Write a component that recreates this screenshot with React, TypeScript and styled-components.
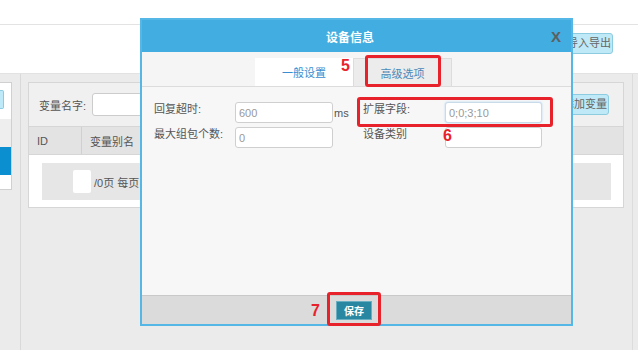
import React from 'react';
import styled, { createGlobalStyle } from 'styled-components';

const GlobalStyle = createGlobalStyle`
  * { box-sizing: border-box; }
  body {
    margin: 0;
    font-family: "Liberation Sans", "Noto Sans CJK SC", sans-serif;
    font-size: 11px;
    color: #555;
  }
`;

const Page = styled.div`
  position: relative;
  width: 638px;
  height: 350px;
  background: #ebebeb;
  overflow: hidden;
  display: flex;
  flex-direction: column;
`;

const TopStrip = styled.div`
  height: 25px;
  background: #fff;
  border-bottom: 1px solid #e3e3e3;
`;

const Toolbar = styled.div`
  height: 49px;
  background: #fff;
  border-bottom: 1px solid #e2e2e2;
  display: flex;
  justify-content: flex-end;
  align-items: flex-start;
  padding: 8px 25px 0 0;
`;

const LightButton = styled.div`
  height: 21px;
  padding: 0 1px;
  background: #bfe9f7;
  border: 1px solid #8ccbe0;
  border-radius: 3px;
  color: #666;
  line-height: 19px;
  white-space: nowrap;
`;

const Main = styled.div`
  flex: 1;
  display: flex;
  padding-right: 5px;
`;

const Sidebar = styled.div`
  width: 21px;
  border-right: 1px solid #d9d9d9;
  padding-top: 8px;
`;

const SidePanel = styled.div`
  width: 12px;
  height: 108px;
  background: #fff;
  border: 1px solid #d0d0d0;
  border-left: none;
  display: flex;
  flex-direction: column;
`;

const SideTop = styled.div`
  height: 36px;
  padding-top: 7px;
`;

const SideStub = styled.div`
  width: 4px;
  height: 19px;
  background: #bde9f8;
  border: 1px solid #8ccbe0;
  border-left: none;
  border-radius: 0 2px 2px 0;
`;

const SideRow = styled.div<{ $active?: boolean }>`
  height: 28px;
  background: ${p => (p.$active ? '#0b8fd0' : '#eeeeee')};
`;

const Content = styled.div`
  flex: 1;
  padding: 8px 8px 0 7px;
  border-right: 1px solid #dcdcdc;
`;

const Card = styled.div`
  border: 1px solid #d6d6d6;
  background: #fff;
`;

const CardHead = styled.div`
  height: 43px;
  background: #f0f0f0;
  display: flex;
  align-items: center;
  padding: 0 14px 0 10px;
`;

const SearchLabel = styled.span`
  margin-right: 6px;
`;

const SearchInput = styled.div`
  width: 200px;
  height: 23px;
  background: #fff;
  border: 1px solid #ccc;
  border-radius: 3px;
`;

const Spacer = styled.div`
  flex: 1;
`;

const TableHead = styled.div`
  height: 29px;
  display: flex;
  background: #e3e3e3;
  border-top: 1px solid #d6d6d6;
  border-bottom: 1px solid #d6d6d6;
`;

const HeadCell = styled.div<{ $w?: number }>`
  ${p => (p.$w ? `width: ${p.$w}px; border-right: 1px solid #d0d0d0;` : 'flex: 1;')}
  display: flex;
  align-items: center;
  padding-left: 8px;
  color: #555;
`;

const TableBody = styled.div`
  padding: 8px 12px 7px 13px;
`;

const Pager = styled.div`
  height: 37px;
  background: #e6e6e6;
  display: flex;
  align-items: center;
  padding-left: 31px;
`;

const PageInput = styled.div`
  width: 18px;
  height: 23px;
  background: #fff;
  border-radius: 2px;
  margin-right: 3px;
`;

/* ---------- modal ---------- */

const Modal = styled.div`
  position: absolute;
  left: 140px;
  top: 18px;
  width: 433px;
  height: 308px;
  border: 2px solid #55b7e6;
  background: #f7f7f7;
  display: flex;
  flex-direction: column;
`;

const ModalHeader = styled.div`
  height: 32px;
  background: #41ade0;
  display: flex;
  align-items: center;
  padding: 0 10px 0 7px;
`;

const ModalTitle = styled.div`
  flex: 1;
  text-align: center;
  color: #fff;
  font-weight: bold;
  font-size: 12px;
`;

const Close = styled.div`
  font-family: "Liberation Sans", sans-serif;
  font-weight: bold;
  font-size: 15px;
  color: #5f5f5f;
  line-height: 1;
`;

const TabBar = styled.div`
  height: 35px;
  background: #f5f5f5;
  border-bottom: 1px solid #dcdcdc;
  display: flex;
  align-items: flex-end;
  padding-left: 113px;
`;

const Tab = styled.div<{ $active?: boolean; $w: number }>`
  position: relative;
  width: ${p => p.$w}px;
  height: 28px;
  display: flex;
  align-items: center;
  justify-content: center;
  background: ${p => (p.$active ? '#fff' : '#ececec')};
  border: ${p => (p.$active ? 'none' : '1px solid #dcdcdc')};
  border-bottom: none;
  color: ${p => (p.$active ? '#3a8dd0' : '#4b89b8')};
`;

const Mark = styled.div<{ $t: number; $r: number; $b: number; $l: number }>`
  position: absolute;
  top: ${p => p.$t}px;
  right: ${p => p.$r}px;
  bottom: ${p => p.$b}px;
  left: ${p => p.$l}px;
  border: 3px solid #e8222b;
  border-radius: 3px;
  pointer-events: none;
  z-index: 2;
`;

const Step = styled.span<{ $x: number; $y: number }>`
  position: absolute;
  left: ${p => p.$x}px;
  top: ${p => p.$y}px;
  z-index: 3;
  font-family: "Liberation Sans", sans-serif;
  font-weight: bold;
  font-size: 16px;
  line-height: 16px;
  color: #e8222b;
`;

const Body = styled.div`
  flex: 1;
  padding: 15px 0 0 12px;
`;

const FormGrid = styled.div`
  display: grid;
  grid-template-columns: 81px 98px 30px 179px;
  row-gap: 4px;
  align-items: center;
`;

const Label = styled.span<{ $w?: number }>`
  align-self: start;
  line-height: 14px;
  color: #555;
  ${p => (p.$w ? `width: ${p.$w}px; flex-shrink: 0;` : '')}
`;

const Field = styled.div<{ $w: number; $glow?: boolean }>`
  width: ${p => p.$w}px;
  height: 21px;
  background: #fff;
  border: 1px solid ${p => (p.$glow ? '#c9dbe8' : '#cfcfcf')};
  border-radius: 3px;
  padding-left: 3px;
  display: flex;
  align-items: center;
  color: #999;
  box-shadow: ${p => (p.$glow ? '0 0 2px rgba(102,175,233,0.5)' : 'none')};
`;

const Unit = styled.span`
  padding-left: 1px;
  color: #555;
`;

const Pair = styled.div`
  position: relative;
  display: flex;
  width: 179px;
`;

const Footer = styled.div`
  height: 29px;
  background: #dbdbdb;
  border-top: 1px solid #c9c9c9;
  display: flex;
  align-items: center;
  justify-content: center;
`;

const SaveButton = styled.div`
  position: relative;
  width: 36px;
  height: 19px;
  background: #2a87a1;
  border: 1px solid #6aaec2;
  color: #fff;
  font-size: 10px;
  font-weight: bold;
  display: flex;
  align-items: center;
  justify-content: center;
  margin-left: -5px;
`;

export default function App() {
  return (
    <Page>
      <GlobalStyle />
      <TopStrip />
      <Toolbar>
        <LightButton>导入导出</LightButton>
      </Toolbar>
      <Main>
        <Sidebar>
          <SidePanel>
            <SideTop>
              <SideStub />
            </SideTop>
            <SideRow />
            <SideRow $active />
          </SidePanel>
        </Sidebar>
        <Content>
          <Card>
            <CardHead>
              <SearchLabel>变量名字:</SearchLabel>
              <SearchInput />
              <Spacer />
              <LightButton>添加变量</LightButton>
            </CardHead>
            <TableHead>
              <HeadCell $w={53}>ID</HeadCell>
              <HeadCell>变量别名</HeadCell>
            </TableHead>
            <TableBody>
              <Pager>
                <PageInput />
                <span>/0页 每页</span>
              </Pager>
            </TableBody>
          </Card>
        </Content>
      </Main>

      <Modal>
        <ModalHeader>
          <ModalTitle>设备信息</ModalTitle>
          <Close>X</Close>
        </ModalHeader>
        <TabBar>
          <Tab $active $w={98}>一般设置</Tab>
          <Tab $w={99}>
            高级选项
            <Mark $t={-4} $r={10} $b={-1} $l={11} />
            <Step $x={-13} $y={-1}>5</Step>
          </Tab>
        </TabBar>
        <Body>
          <FormGrid>
            <Label>回复超时:</Label>
            <Field $w={98}>600</Field>
            <Unit>ms</Unit>
            <Pair>
              <Label $w={82}>扩展字段:</Label>
              <Field $w={97} $glow>0;0;3;10</Field>
              <Mark $t={-5} $r={-11} $b={-4} $l={-6} />
              <Step $x={80} $y={26}>6</Step>
            </Pair>

            <Label>最大组包个数:</Label>
            <Field $w={98}>0</Field>
            <Unit />
            <Pair>
              <Label $w={82}>设备类别</Label>
              <Field $w={97} />
            </Pair>
          </FormGrid>
        </Body>
        <Footer>
          <SaveButton>
            保存
            <Mark $t={-10} $r={-10} $b={-7} $l={-10} />
            <Step $x={-26} $y={1}>7</Step>
          </SaveButton>
        </Footer>
      </Modal>
    </Page>
  );
}
